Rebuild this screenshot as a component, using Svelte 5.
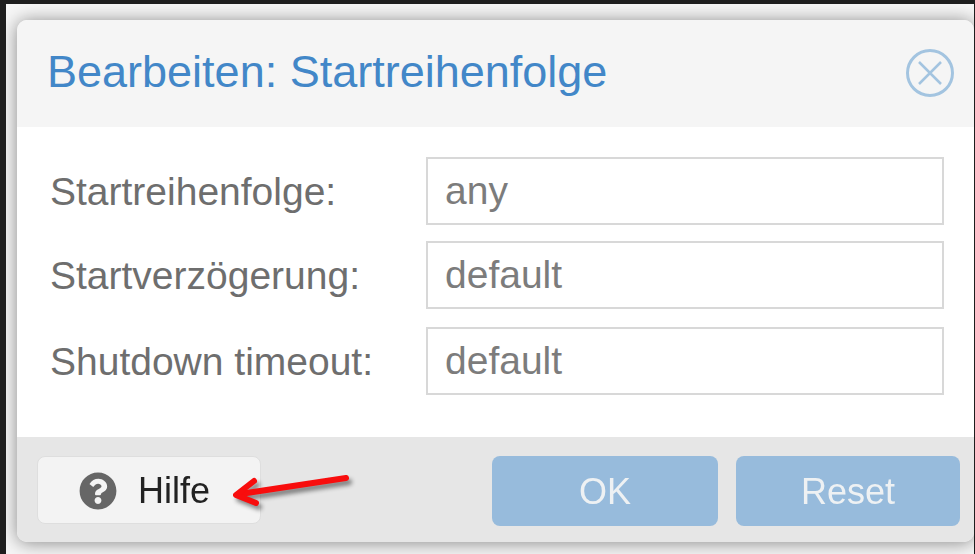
<script>
  let fields = [
    { label: "Startreihenfolge:", value: "any" },
    { label: "Startverzögerung:", value: "default" },
    { label: "Shutdown timeout:", value: "default" }
  ];
</script>

<style>
  :global(body) {
    background: #1e1e1e;
  }

  .screen {
    height: 554px;
    box-sizing: border-box;
    padding: 4px 1px 0 6px;
    overflow: hidden;
    position: relative;
    font-family: "Liberation Sans", Arial, sans-serif;
  }

  .backdrop {
    height: 100%;
    box-sizing: border-box;
    padding: 16px 0 0 11px;
    background: #f6f6f6;
    overflow: hidden;
  }

  .dialog {
    height: 522px;
    display: flex;
    flex-direction: column;
    border-radius: 10px;
    overflow: hidden;
    box-shadow: 0 1px 18px rgba(0, 0, 0, 0.45);
    filter: blur(0.7px);
  }

  .header {
    height: 107px;
    background: #f5f5f5;
    display: flex;
    align-items: center;
    justify-content: space-between;
    padding: 0 20px 0 30px;
    box-sizing: border-box;
  }

  .title {
    margin: 0 0 3px;
    font-size: 45px;
    font-weight: normal;
    color: #4287c8;
  }

  .close {
    display: block;
    padding: 0;
    border: none;
    background: none;
    margin-top: 2px;
  }

  .body {
    flex: 1;
    background: #fff;
    padding: 30px 30px 0 33px;
    display: flex;
    flex-direction: column;
    gap: 16px;
  }

  .row {
    display: flex;
    align-items: center;
    height: 68px;
  }

  .row:last-child {
    margin-top: 2px;
  }

  .row label {
    width: 376px;
    padding-top: 1px;
    font-size: 39px;
    color: #6e6e6e;
  }

  .input {
    flex: 1;
    height: 68px;
    box-sizing: border-box;
    border: 2px solid #d8d8d8;
    padding: 0 16px 1px 17px;
    display: flex;
    align-items: center;
    font-size: 39px;
    color: #7c7c7c;
  }

  .footer {
    height: 105px;
    box-sizing: border-box;
    background: #e6e6e6;
    display: flex;
    align-items: center;
    padding: 2px 14px 0 20px;
    gap: 18px;
  }

  button.btn {
    font: inherit;
    font-size: 36px;
    height: 70px;
    border-radius: 8px;
    border: none;
    padding: 2px 0 0;
  }

  .help {
    display: flex;
    align-items: center;
    justify-content: flex-start;
    height: 68px !important;
    width: 224px;
    padding-left: 41px !important;
    gap: 21px;
    background: #f3f3f3;
    border: 1px solid #dedede !important;
    color: #222;
    margin-right: auto;
    margin-top: -1px;
    box-sizing: border-box;
  }

  .primary {
    background: #97bbdc;
    color: #eef1f3;
  }

  .ok {
    width: 226px;
  }

  .reset {
    width: 224px;
  }

  .arrow {
    position: absolute;
    left: 225px;
    top: 465px;
    filter: drop-shadow(3px 4px 2px rgba(0, 0, 0, 0.45));
  }
</style>

<div class="screen">
  <div class="backdrop">
    <div class="dialog">
      <div class="header">
        <h1 class="title">Bearbeiten: Startreihenfolge</h1>
        <button class="close" aria-label="Schließen">
          <svg width="48" height="48" viewBox="0 0 48 48" fill="none" stroke="#a3c4e0">
            <circle cx="24" cy="24" r="22.5" stroke-width="3" />
            <path d="M13 13 L35 35 M35 13 L13 35" stroke-width="2.5" />
          </svg>
        </button>
      </div>
      <div class="body">
        {#each fields as field}
          <div class="row">
            <label>{field.label}</label>
            <div class="input">{field.value}</div>
          </div>
        {/each}
      </div>
      <div class="footer">
        <button class="btn help">
          <svg width="38" height="38" viewBox="0 0 512 512" fill="#666">
            <path d="M504 256c0 136.997-111.043 248-248 248S8 392.997 8 256C8 119.083 119.043 8 256 8s248 111.083 248 248zM262.655 90c-54.497 0-89.255 22.957-116.549 63.758-3.536 5.286-2.353 12.415 2.715 16.258l34.699 26.31c5.205 3.947 12.621 3.008 16.665-2.122 17.864-22.658 30.113-35.797 57.303-35.797 20.429 0 45.698 13.148 45.698 32.958 0 14.976-12.363 22.667-32.534 33.976C247.128 238.528 216 254.941 216 296v4c0 6.627 5.373 12 12 12h56c6.627 0 12-5.373 12-12v-1.333c0-28.462 83.186-29.647 83.186-106.667 0-58.002-60.165-102-116.531-102zM256 338c-25.365 0-46 20.635-46 46 0 25.364 20.635 46 46 46s46-20.636 46-46c0-25.365-20.635-46-46-46z" />
          </svg>
          Hilfe
        </button>
        <button class="btn primary ok">OK</button>
        <button class="btn primary reset">Reset</button>
      </div>
    </div>
  </div>
  <svg class="arrow" width="130" height="50" viewBox="225 465 130 50" fill="none" stroke="#f80d0d" stroke-linecap="round" stroke-linejoin="round">
    <path d="M346 478 L240 494" stroke-width="6" />
    <path d="M254 481 L236 495 L256 503" stroke-width="6" />
  </svg>
</div>
